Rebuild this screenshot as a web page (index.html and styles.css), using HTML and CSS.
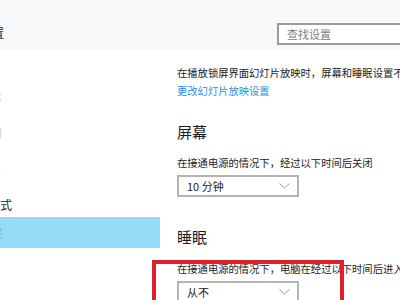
FILE: index.html
```html
<!DOCTYPE html>
<html lang="zh-CN">
<head>
  <meta charset="UTF-8" />
  <title>电源和睡眠</title>
  <link rel="stylesheet" href="styles.css">
</head>
<body>

<div class="page">
  <!-- top band with search -->
  <div class="topbar">
    <div class="side-top"><span class="clip dark">设置</span></div>
    <div class="search">查找设置</div>
  </div>

  <div class="layout">
    <!-- sidebar, mostly cut off at the left edge -->
    <nav class="sidebar">
      <div class="nav-item i1"><span class="clip">显示</span></div>
      <div class="nav-item i2"><span class="clip">通知</span></div>
      <div class="nav-item i3"><span class="clip">应用</span></div>
      <div class="nav-item i4"><span class="clip dark">平板模式</span></div>
      <div class="nav-item active"><span class="clip">电源和睡眠</span></div>
    </nav>

    <main class="content">
      <p class="desc">在播放锁屏界面幻灯片放映时，屏幕和睡眠设置不起作用。</p>
      <a href="#" class="link">更改幻灯片放映设置</a>

      <h2 class="section-title first">屏幕</h2>
      <p class="desc">在接通电源的情况下，经过以下时间后关闭</p>
      <div class="select">
        <span>10 分钟</span>
        <svg class="chev" width="11" height="6" viewBox="0 0 11 6"><path d="M0.5 0.5 L5.5 5 L10.5 0.5" fill="none" stroke="#9a9a9a" stroke-width="1"/></svg>
      </div>

      <h2 class="section-title">睡眠</h2>
      <p class="desc">在接通电源的情况下，电脑在经过以下时间后进入睡眠状态</p>
      <div class="select">
        <span>从不</span>
        <svg class="chev" width="11" height="6" viewBox="0 0 11 6"><path d="M0.5 0.5 L5.5 5 L10.5 0.5" fill="none" stroke="#9a9a9a" stroke-width="1"/></svg>
      </div>
    </main>
  </div>

  <!-- red annotation box drawn over the page -->
  <div class="mark"></div>
</div>

</body>
</html>
```

FILE: styles.css
```css
body {
  margin: 0;
  font-family: "Noto Sans CJK SC", "Noto Sans", sans-serif;
  background: #ffffff;
  color: #1f1f1f;
}

.page {
  position: relative;
  width: 400px;
  height: 300px;
  overflow: hidden;
}

.topbar {
  height: 50px;
  background: #f6f8fa;
  display: flex;
}

.side-top {
  width: 160px;
  flex-shrink: 0;
  padding-top: 24px;
  font-size: 12px;
  line-height: 18px;
  overflow: hidden;
}

.search {
  margin-top: 23px;
  margin-left: 117px;
  width: 140px;
  height: 22px;
  flex-shrink: 0;
  box-sizing: border-box;
  border: 2px solid #9c9c9c;
  background: #fff;
  padding-left: 8px;
  font-size: 11px;
  line-height: 18px;
  color: #808080;
}

.layout {
  display: flex;
}

.sidebar {
  width: 160px;
  flex-shrink: 0;
  overflow: hidden;
  font-size: 12px;
  color: #cfcfcf;
}

.nav-item {
  height: 36px;
  line-height: 36px;
  white-space: nowrap;
}

.nav-item.i1 {
  margin-top: 29px;
}

.nav-item.i4 {
  height: 30px;
}

.nav-item.active {
  height: 31px;
  line-height: 31px;
  background: #94dbf8;
  color: #74b6d4;
}

.clip {
  display: inline-block;
  white-space: nowrap;
}

.side-top .clip { margin-left: -20px; }
.i1 .clip { margin-left: -22px; }
.i2 .clip { margin-left: -22px; }
.i3 .clip { margin-left: -23px; }
.i4 .clip { margin-left: -36px; }
.active .clip { margin-left: -58px; }

.dark {
  color: #2b2b2b;
}

.content {
  flex: 1;
  padding-left: 17px;
  padding-top: 14px;
  white-space: nowrap;
}

.desc {
  margin: 0;
  font-size: 10.3px;
  line-height: 18px;
  color: #222;
}

.link {
  display: block;
  font-size: 10.3px;
  line-height: 18px;
  color: #2a93d8;
  text-decoration: none;
}

.section-title {
  margin: 21px 0 11px;
  font-size: 15px;
  font-weight: normal;
  line-height: 22px;
  color: #1a1a1a;
}

.section-title + .desc {
  margin-bottom: 3px;
}

.select {
  width: 122px;
  height: 22px;
  box-sizing: border-box;
  border: 2px solid #b4b4b4;
  display: flex;
  align-items: center;
  justify-content: space-between;
  padding: 0 7px 0 8px;
  font-size: 11px;
  color: #222;
}

.select + .section-title {
  margin-top: 29px;
  margin-bottom: 12px;
}

.mark {
  position: absolute;
  left: 152px;
  top: 260px;
  width: 184px;
  height: 60px;
  border: 4px solid #e0202c;
}
```
